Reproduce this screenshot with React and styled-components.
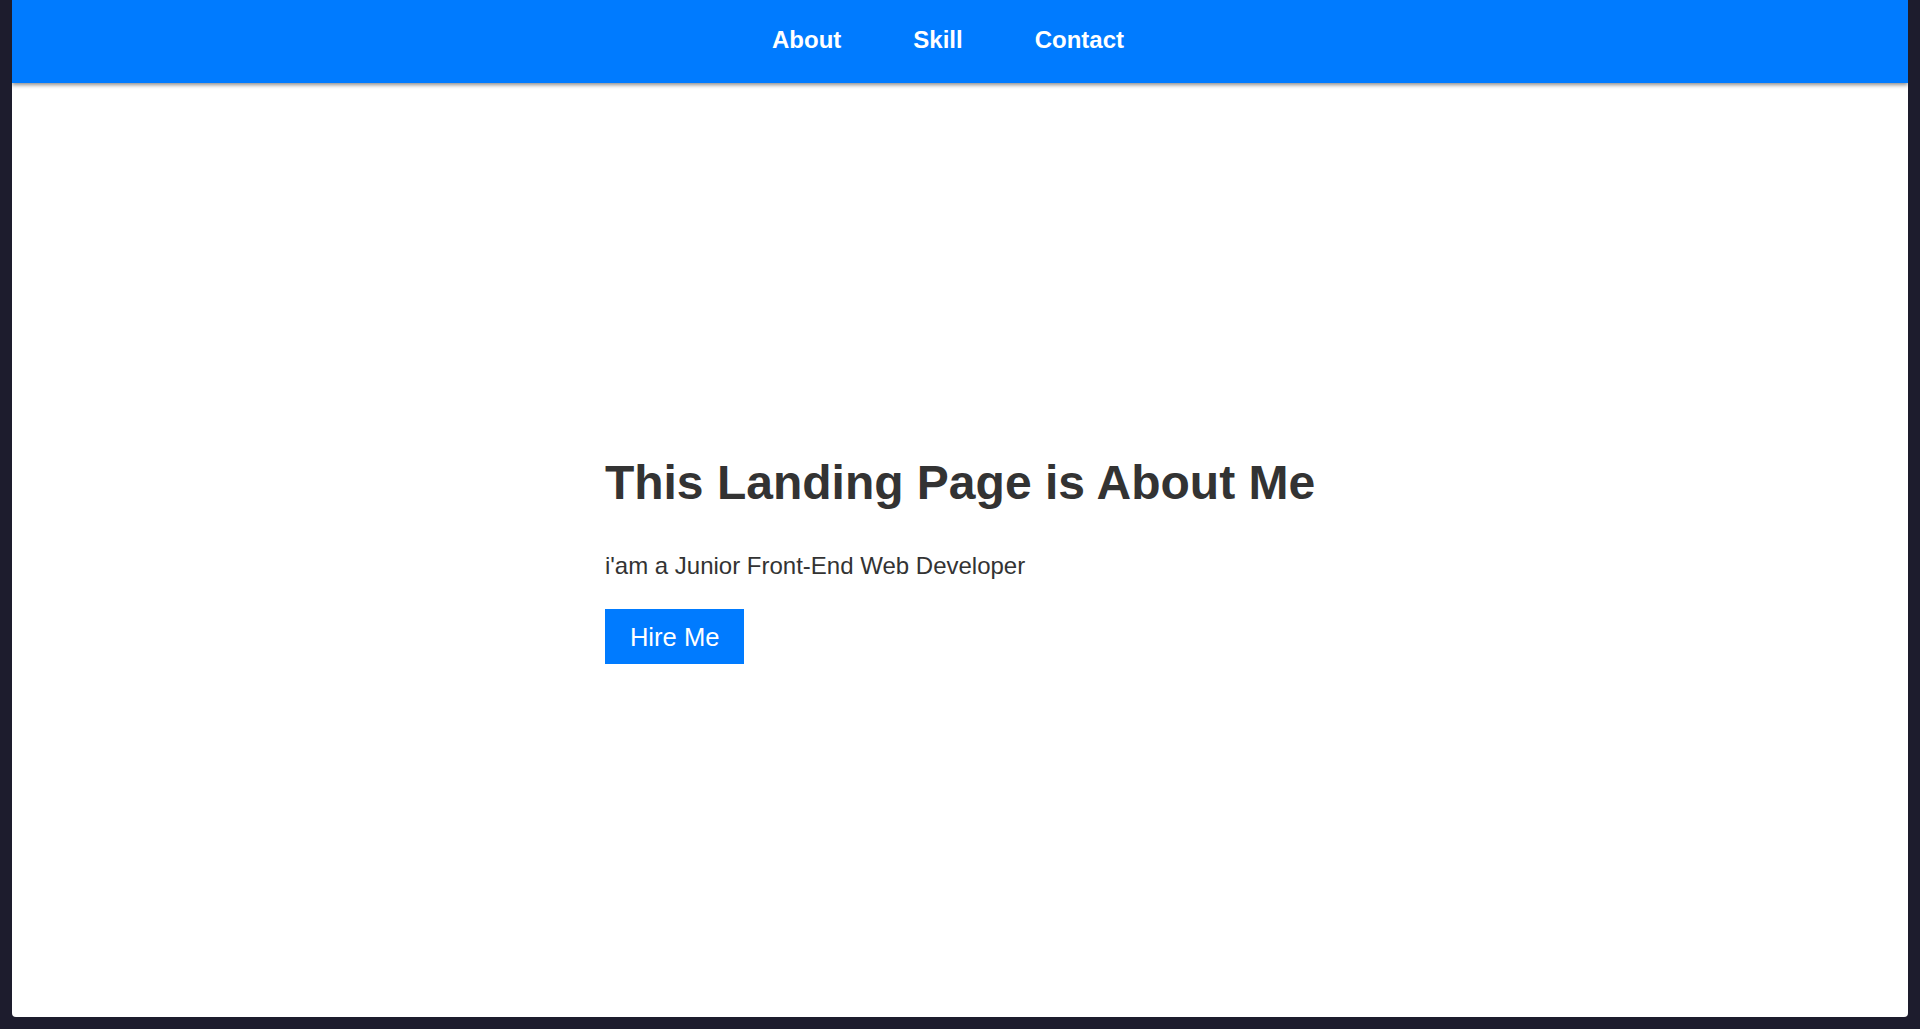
import React from 'react';
import styled, { createGlobalStyle } from 'styled-components';

const GlobalStyle = createGlobalStyle`
  html, body {
    margin: 0;
    padding: 0;
    background: #1d1c2d;
    font-family: "Liberation Sans", Arial, sans-serif;
  }
`;

// dark frame around the white page
const Frame = styled.div`
  box-sizing: border-box;
  height: 1029px;
  padding: 0 12px 12px 12px;
`;

const Page = styled.div`
  height: 100%;
  background: #fff;
  border-bottom-left-radius: 4px;
  border-bottom-right-radius: 4px;
  display: flex;
  flex-direction: column;
  overflow: hidden;
`;

const Navbar = styled.nav`
  position: relative;
  z-index: 1;
  height: 83px;
  flex-shrink: 0;
  background: #007bff;
  box-shadow: 0 2px 4px rgba(0, 0, 0, 0.45);
  display: flex;
  justify-content: center;
  align-items: center;
  gap: 72px;
  padding: 0 24px 3px 0;
  box-sizing: border-box;
`;

const NavLink = styled.a`
  color: #fff;
  font-size: 24px;
  font-weight: bold;
  line-height: 28px;
  text-decoration: none;
  cursor: pointer;
`;

const Hero = styled.section`
  flex: 1;
  display: flex;
  justify-content: center;
  align-items: flex-start;
  padding-top: 372px;
`;

const Content = styled.div`
  display: flex;
  flex-direction: column;
  align-items: flex-start;
`;

const Title = styled.h1`
  margin: 0;
  font-size: 48px;
  line-height: 56px;
  font-weight: bold;
  color: #333;
`;

const Tagline = styled.p`
  margin: 41px 0 0;
  font-size: 24px;
  line-height: 28px;
  color: #333;
`;

const HireButton = styled.button`
  margin-top: 29px;
  height: 55px;
  padding: 0 25px;
  border: none;
  background: #007bff;
  color: #fff;
  font-family: inherit;
  font-size: 25.6px;
  line-height: 30px;
  cursor: pointer;
`;

const App = () => {
  return (
    <>
      <GlobalStyle />
      <Frame>
        <Page>
          <Navbar>
            <NavLink>About</NavLink>
            <NavLink>Skill</NavLink>
            <NavLink>Contact</NavLink>
          </Navbar>
          <Hero>
            <Content>
              <Title>This Landing Page is About Me</Title>
              <Tagline>i'am a Junior Front-End Web Developer</Tagline>
              <HireButton>Hire Me</HireButton>
            </Content>
          </Hero>
        </Page>
      </Frame>
    </>
  );
};

export default App;
